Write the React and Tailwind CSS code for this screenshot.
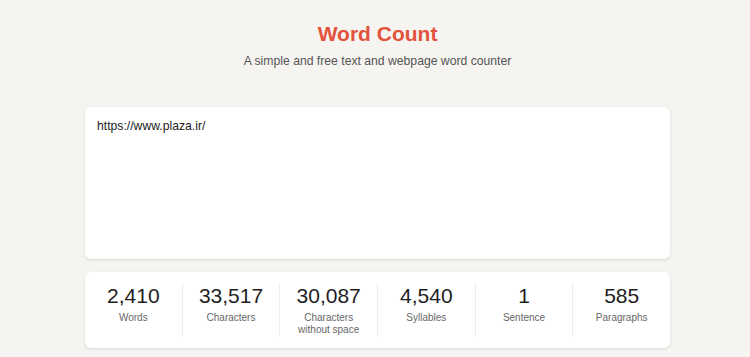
const stats = [
  { value: "2,410", label: "Words" },
  { value: "33,517", label: "Characters" },
  { value: "30,087", label: "Characters without space" },
  { value: "4,540", label: "Syllables" },
  { value: "1", label: "Sentence" },
  { value: "585", label: "Paragraphs" },
];

export default function App() {
  return (
    <div className="min-h-screen bg-[#f5f4f0] pl-[5px] font-['Liberation_Sans',Arial,sans-serif]">
      <div className="pt-[21px] text-center">
        <h1 className="text-[21px] font-bold leading-[26px] text-[#e2533c]">
          Word Count
        </h1>
        <p className="mt-[7px] text-[12.2px] leading-[15px] text-[#555]">
          A simple and free text and webpage word counter
        </p>
      </div>

      <div className="mx-auto mt-[38px] w-[585px]">
        {/* TEXT AREA */}
        <div className="h-[152px] rounded-md bg-white px-3 pt-[12px] shadow-[0_1px_3px_rgba(0,0,0,0.12)]">
          <p className="text-[12.2px] leading-[15px] text-[#222]">https://www.plaza.ir/</p>
        </div>

        {/* STATS */}
        <div className="mt-[13px] flex h-[76px] rounded-md bg-white pt-[11px] shadow-[0_1px_3px_rgba(0,0,0,0.12)]">
          {stats.map((s, i) => (
            <div
              key={s.label}
              className={`flex h-[54px] flex-1 flex-col items-center ${
                i > 0 ? "border-l border-[#ececec]" : ""
              }`}
            >
              <div className="text-[21px] leading-[26px] text-[#1e1e1e]">{s.value}</div>
              <div className="mt-[3px] w-[70px] text-center text-[10px] leading-[12px] text-[#666]">
                {s.label}
              </div>
            </div>
          ))}
        </div>
      </div>
    </div>
  );
}
